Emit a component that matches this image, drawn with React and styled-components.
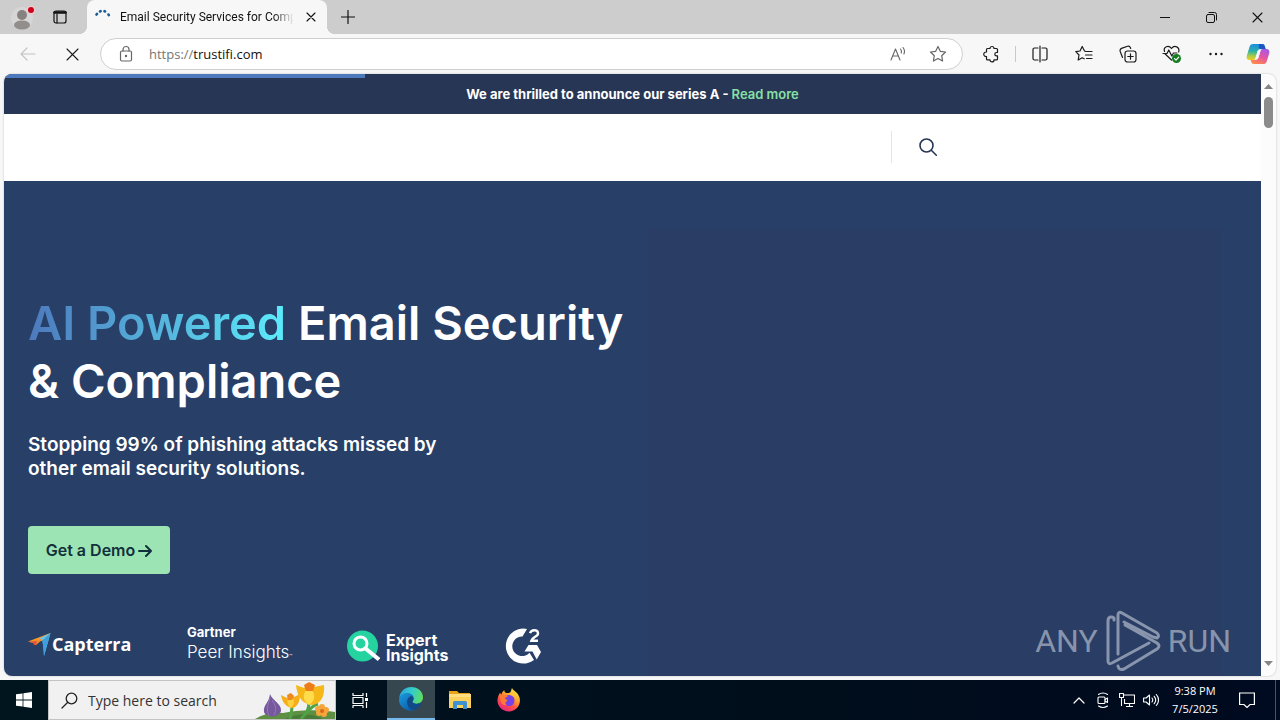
import React from 'react'
import styled, { createGlobalStyle, css } from 'styled-components'

const GlobalStyle = createGlobalStyle`
    * {
        box-sizing: border-box;
    }
    body {
        margin: 0;
        font-family: 'Open Sans', 'Noto Sans', sans-serif;
    }
    button {
        border: 0;
        padding: 0;
        background: none;
        color: inherit;
        font-family: inherit;
    }
    svg {
        display: block;
        flex: none;
    }
`;

const Desktop = styled.div`
    position: relative;
    display: flex;
    flex-direction: column;
    height: 100vh;
    overflow: hidden;
    background: #f7f7f7;
`;

/* browser chrome */

const TabStrip = styled.div`
    display: flex;
    height: 34px;
    background: #cdcdcd;
    color: #111;
`;

const StripButton = styled.button`
    display: flex;
    align-items: center;
    justify-content: center;
    width: ${props => props.$width}px;
    height: 34px;
`;

const Tab = styled.div`
    position: relative;
    display: flex;
    align-items: center;
    width: 240px;
    height: 34px;
    margin-left: 11px;
    padding: 0 8px;
    gap: 9px;
    background: #f7f7f7;
    border-radius: 8px 8px 0 0;
    &::before, &::after {
        content: '';
        position: absolute;
        bottom: 0;
        width: 8px;
        height: 8px;
    }
    &::before {
        left: -8px;
        background: radial-gradient(circle at 0 0, #cdcdcd 8px, #f7f7f7 8px);
    }
    &::after {
        right: -8px;
        background: radial-gradient(circle at 100% 0, #cdcdcd 8px, #f7f7f7 8px);
    }
`;

const TabTitle = styled.span`
    flex: 1;
    overflow: hidden;
    white-space: nowrap;
    font-family: Roboto, 'Open Sans', sans-serif;
    font-size: 12px;
    line-height: 16px;
    color: #111;
    mask-image: linear-gradient(to right, #000 88%, transparent);
`;

const Spacer = styled.div`
    flex: 1;
`;

const Toolbar = styled.div`
    display: flex;
    align-items: center;
    height: 40px;
    padding: 0 2px 0 6px;
    color: #1b1b1b;
`;

const ToolButton = styled.button`
    display: flex;
    align-items: center;
    justify-content: center;
    width: ${props => props.$width || 44}px;
    height: 32px;
    color: ${props => props.$muted ? '#c4c4c4' : 'inherit'};
`;

const AddressBar = styled.div`
    display: flex;
    flex: 1;
    align-items: center;
    height: 32px;
    margin: 0 7px 0 6px;
    padding: 0 4px 0 16px;
    border: 1px solid #cfcfd2;
    border-radius: 16px;
    background: #fff;
    color: #666;
`;

const Address = styled.div`
    flex: 1;
    margin-left: 14px;
    font-size: 13px;
    line-height: 20px;
    color: #767676;
    span {
        color: #111;
    }
`;

const ToolDivider = styled.div`
    width: 1px;
    height: 16px;
    margin: 0 2px 0 1px;
    background: #c9c9c9;
`;

const Viewport = styled.div`
    display: flex;
    flex: 1;
    min-height: 0;
    margin: 0 4px 4px;
    border-radius: 8px;
    overflow: hidden;
    background: #fcfcfc;
    box-shadow: 0 0 2px rgba(0, 0, 0, 0.25);
`;

const ScrollTrack = styled.div`
    display: flex;
    flex-direction: column;
    align-items: center;
    width: 15px;
    padding: 9px 0;
    color: #858585;
`;

const ScrollThumb = styled.div`
    width: 9px;
    height: 31px;
    margin-top: 7px;
    border-radius: 5px;
    background: #8b8b8b;
`;

/* site */

const Site = styled.main`
    position: relative;
    display: flex;
    flex: 1;
    flex-direction: column;
    min-width: 0;
    font-family: Inter, 'Open Sans', sans-serif;
`;

const Progress = styled.div`
    position: absolute;
    top: 0;
    left: 0;
    width: 28.7%;
    height: 4px;
    background: #4d79bd;
`;

const Announcement = styled.div`
    display: flex;
    flex: none;
    align-items: center;
    justify-content: center;
    height: 40px;
    background: #283655;
    color: #fff;
    font-size: 13px;
    font-weight: 700;
    line-height: 20px;
    white-space: pre;
    a {
        color: #86e0a6;
        font-weight: 600;
        text-decoration: none;
    }
`;

const SiteNav = styled.nav`
    display: flex;
    flex: none;
    align-items: center;
    justify-content: flex-end;
    height: 67px;
    padding: 0 315px 2px 0;
    background: #fff;
    color: #283655;
`;

const SearchButton = styled.button`
    display: flex;
    align-items: center;
    justify-content: flex-end;
    width: 55px;
    height: 32px;
    padding-right: 9px;
    border-left: 1px solid #e3e5ea;
`;

const Hero = styled.section`
    display: grid;
    flex: 1;
    grid-template-columns: 620px 1fr;
    min-height: 0;
    padding: 48px 39px 0 24px;
    overflow: hidden;
    background: #284068;
    color: #fff;
`;

const HeroText = styled.div`
    padding-top: 65px;
`;

const HeroMedia = styled.div`
    background: #2a3d64;
`;

const Title = styled.h1`
    margin: 0;
    font-size: 47px;
    font-weight: 600;
    line-height: 58px;
    white-space: nowrap;
    span {
        background: linear-gradient(90deg, #4d79bd, #5cecfb);
        background-clip: text;
        color: transparent;
    }
`;

const SubTitle = styled.p`
    margin: 23px 0 45px;
    font-size: 19px;
    font-weight: 600;
    line-height: 24px;
`;

const DemoButton = styled.button`
    display: flex;
    align-items: center;
    justify-content: center;
    gap: 3px;
    width: 142px;
    height: 48px;
    border-radius: 4px;
    background: #9de4b4;
    color: #12303c;
    font-size: 16px;
    font-weight: 600;
    line-height: 20px;
`;

const Logos = styled.div`
    display: flex;
    align-items: center;
    gap: 55px;
    height: 40px;
    margin-top: 52px;
`;

const Capterra = styled.div`
    display: flex;
    align-items: center;
    gap: 1px;
    width: 104px;
    padding-bottom: 4px;
    font-family: 'Open Sans', sans-serif;
    font-size: 18px;
    font-weight: 700;
    line-height: 24px;
`;

const Gartner = styled.div`
    width: 105px;
    white-space: nowrap;
    font-size: 17px;
    font-weight: 300;
    line-height: 24px;
    strong {
        display: block;
        font-size: 13px;
        font-weight: 700;
        line-height: 16px;
    }
    small {
        font-size: 5px;
    }
`;

const Expert = styled.div`
    display: flex;
    align-items: center;
    gap: 6px;
    width: 103px;
    font-size: 16px;
    font-weight: 700;
    line-height: 15px;
    span {
        padding-top: 4px;
    }
`;

const Watermark = styled.div`
    position: absolute;
    right: 49px;
    bottom: 48px;
    display: flex;
    align-items: center;
    gap: 7px;
    color: rgba(200, 208, 222, 0.6);
    font-family: Roboto, 'Liberation Sans', sans-serif;
    font-size: 32px;
    font-weight: 400;
    line-height: 62px;
`;

/* taskbar */

const Taskbar = styled.footer`
    display: flex;
    flex: none;
    height: 40px;
    background: linear-gradient(90deg, #00151e, #000d1c 70%, #000a20);
    color: #fff;
`;

const TaskButton = styled.button`
    display: flex;
    align-items: center;
    justify-content: center;
    width: ${props => props.$width || 48}px;
    height: 40px;
    ${props => props.$active && css`
        background: #37474f;
        border-bottom: 2px solid #76b9ed;
    `}
`;

const SearchBox = styled.label`
    display: flex;
    align-items: center;
    width: 288px;
    height: 40px;
    padding-left: 12px;
    border: 1px solid #c4c4c4;
    background: #f1f1f1;
    color: #222;
    overflow: hidden;
`;

const SearchInput = styled.input`
    flex: 1;
    min-width: 0;
    margin-left: 10px;
    padding: 0;
    border: 0;
    background: none;
    font-family: 'Open Sans', sans-serif;
    font-size: 14px;
    &::placeholder {
        color: #333;
        opacity: 1;
    }
`;

const Apps = styled.div`
    display: flex;
    gap: 1px;
    margin-left: 3px;
`;

const Clock = styled.time`
    width: 48px;
    margin-left: 8px;
    padding-top: 2px;
    text-align: center;
    font-size: 11px;
    line-height: 18px;
    white-space: nowrap;
`;

const ShowDesktop = styled.button`
    width: 5px;
    height: 40px;
    border-left: 1px solid #4a525f;
`;

const Icon = ({ size = 20, width, height, children, stroke = 1.2, ...rest }) => (
    <svg
        width={width || size}
        height={height || size}
        viewBox={`0 0 ${width || size} ${height || size}`}
        fill="none"
        stroke="currentColor"
        strokeWidth={stroke}
        strokeLinecap="round"
        strokeLinejoin="round"
        aria-hidden="true"
        {...rest}
    >
        {children}
    </svg>
)

const ProfileIcon = () => (
    <Icon size={28} stroke="0">
        <circle cx="14" cy="15" r="11" fill="#d6d6d6" />
        <circle cx="14" cy="12" r="5" fill="#858280" />
        <ellipse cx="14" cy="22" rx="8" ry="4.5" fill="#918e8b" />
        <circle cx="23" cy="7" r="4.5" fill="#e6cccc" />
        <circle cx="23" cy="7" r="3" fill="#d0021b" />
    </Icon>
)

const CloseIcon = ({ size = 10 }) => (
    <Icon size={size} stroke="1.1">
        <path d={`M1 1L${size - 1} ${size - 1}M${size - 1} 1L1 ${size - 1}`} />
    </Icon>
)

const CopilotIcon = () => (
    <svg width="24" height="22" viewBox="0 0 24 22" aria-hidden="true">
        <defs>
            <linearGradient id="copA" x1="0.3" y1="0" x2="0.2" y2="1">
                <stop offset="0" stopColor="#1b8fe0" />
                <stop offset="0.45" stopColor="#2db1a8" />
                <stop offset="0.75" stopColor="#a7cd45" />
                <stop offset="1" stopColor="#f5cb21" />
            </linearGradient>
            <linearGradient id="copB" x1="0.8" y1="0" x2="0.3" y2="1">
                <stop offset="0" stopColor="#a35be8" />
                <stop offset="0.5" stopColor="#e554a4" />
                <stop offset="1" stopColor="#ff8a4c" />
            </linearGradient>
        </defs>
        <path d="M7 1h9c2 0 2.500 1 3 3l.6 2H15c-2 0-3 1-3.500 2.500L9.500 15c-.5 1.500-1 2-2.500 2H4c-3 0-4-2-3-5l2.500-8C4 2 5 1 7 1z" fill="url(#copA)" />
        <path d="M13 1h3c2 0 2.500 1 3 3l.6 2H15c-1.300 0-2-.6-2.300-2z" fill="#1d55c4" />
        <path d="M17 21H8c-2 0-2.500-1-3-3l-.4-1H9c2 0 3-1 3.500-2.500L14.500 8c.5-1.500 1-2 2.500-2h3c3 0 4 2 3 5l-2.500 8c-.5 1.500-1.500 2-3.500 2z" fill="url(#copB)" />
        <path d="M11.800 7.500h2.800L12.300 15H9.500z" fill="#f7f7f7" />
    </svg>
)

const EdgeIcon = () => (
    <svg width="24" height="24" viewBox="0 0 24 24" aria-hidden="true">
        <defs>
            <linearGradient id="edgeTop" x1="0" y1="0.4" x2="1" y2="0.6">
                <stop offset="0" stopColor="#2aa9e0" />
                <stop offset="0.55" stopColor="#37cfc4" />
                <stop offset="1" stopColor="#62dd58" />
            </linearGradient>
            <linearGradient id="edgeLow" x1="0" y1="0" x2="0.8" y2="1">
                <stop offset="0" stopColor="#1a9de2" />
                <stop offset="1" stopColor="#0c59a4" />
            </linearGradient>
        </defs>
        <path d="M.2 11C1 4.500 6 0 12.200 0 19 0 24 4.700 24 10.300c0 4-3 6.400-6.400 6.400-2.700 0-4.200-.9-4.200-1.900 0-.8 1.200-1.200 1.200-3.300C14.600 8.600 12 6.400 8.600 6.400 4.800 6.400 1.500 8.500.2 11z" fill="url(#edgeTop)" />
        <path d="M.1 12.500C.3 8.600 4 5.800 8.500 6c3.300.2 5.500 2 6 4-1-.9-2-1-3-.6-2 .8-3.300 3-3.300 5.600 0 4.300 3.500 8 8 8.200C9 25.600-.6 20.800.1 12.500z" fill="url(#edgeLow)" />
        <path d="M8.200 14.800c0-2.400 1.400-4.600 3.400-5.200 1.600-.3 2.800.5 2.900 2 .1 1.700-1.100 2.300-1.100 3.200 0 1 1.600 2.100 4.300 2.100 1.900 0 3.500-.7 4.500-1.400.4-.2.700.2.500.6C21 20 17.500 23 14 23c-3.400-.6-5.800-4.200-5.800-8.200z" fill="#114a8b" />
    </svg>
)

const FolderIcon = () => (
    <svg width="22" height="20" viewBox="0 0 22 20" aria-hidden="true">
        <path d="M0 1h8l2 2h11v3H0z" fill="#e8a317" />
        <path d="M0 4h22v14H0z" fill="#fbd05c" />
        <path d="M0 4h22v3H0z" fill="#ffdd83" />
        <path d="M4 19v-6c0-1.500.8-2 2-2h10c1.200 0 2 .5 2 2v6h-4v-4H8v4z" fill="#3d93d0" />
    </svg>
)

const FirefoxIcon = () => (
    <svg width="24" height="24" viewBox="0 0 24 24" aria-hidden="true">
        <defs>
            <linearGradient id="fox" x1="0.8" y1="0" x2="0.2" y2="1">
                <stop offset="0" stopColor="#fff14d" />
                <stop offset="0.35" stopColor="#ffa52c" />
                <stop offset="0.65" stopColor="#ff4c49" />
                <stop offset="1" stopColor="#e0218a" />
            </linearGradient>
        </defs>
        <path d="M15 0c1 3 6 4 7.500 9.500C24.500 17 19 23.500 12 23.500S0 18 .5 12C.6 8.500 2 6.500 3.200 4.500c.2 1 .5 1.600 1 2.200C5 4.500 5.800 3.200 7.400 2.200 7.300 3.700 8 4.500 9 5h3c2 0 2-3 3-5z" fill="url(#fox)" />
        <circle cx="12" cy="12.500" r="5.500" fill="#7542e5" />
        <path d="M3 8c3-2 6-1.500 8 1-1.500 0-3 .5-3 2 3 1 3 1 1.500 2.500C8 15 8 16 10 17c-5 1-7-3-7-9z" fill="#ff7a35" />
        <path d="M12 5c4-1 7 2 7.500 6-1-2-2-3-4-3.500C14 7 13 6 12 5z" fill="#ffc93c" />
    </svg>
)

const FlowersArt = () => (
    <svg width="80" height="38" viewBox="0 0 80 38" aria-hidden="true">
        <path d="M0 38c8-5 18-7 28-6 12-3 36-4 52-1v7z" fill="#5e8f43" />
        <path d="M30 38c8-5 24-6 34-2l4 2z" fill="#497c38" />
        <path d="M37 25c0 5-1 8-2 13M54 21c0 7-2 11-8 17M51 33c5-7 8-9 12-10" fill="none" stroke="#4fa344" strokeWidth="3" />
        <path d="M15 13c2 6 12 10 11 17-2 7-15 7-17 1-1-7 5-9 6-18z" fill="#76599d" />
        <path d="M15 17c-2 7-4 11-1 18M17 19c4 6 5 10 2 15" fill="none" stroke="#9478b8" />
        <path d="M26 14l6 3 3-5 4 4 6-3c0 7-2 13-8 14-6-1-10-6-11-13z" fill="#f5ae18" />
        <path d="M35 14c-4 5-3 10 1 13 4-4 4-9-1-13z" fill="#ffd03d" />
        <path d="M32 14l4-2 3 3-2 4h-4z" fill="#ee8a1c" />
        <path d="M41 4l8 3 5-5 5 4 10-2c1 11-3 19-12 20-10-1-15-9-16-20z" fill="#f6b819" />
        <path d="M54 6c-7 6-7 13 0 18 7-5 7-12 0-18z" fill="#ffdc4c" />
        <path d="M49 4l5-3 6 3-2 6h-7z" fill="#ee7c19" />
        <g fill="#f4a63a">
            <circle cx="67" cy="26" r="3" />
            <circle cx="71" cy="29" r="3" />
            <circle cx="69" cy="33" r="3" />
            <circle cx="64" cy="32" r="3" />
            <circle cx="63" cy="28" r="3" />
        </g>
        <circle cx="67" cy="30" r="2" fill="#d9661b" />
    </svg>
)

const BrowserTabs = () => (
    <TabStrip>
        <StripButton $width={44} aria-label="Profile"><ProfileIcon /></StripButton>
        <StripButton $width={32} aria-label="Tab actions">
            <Icon size={14}>
                <rect x="1" y="1" width="12" height="12" rx="2" />
                <path d="M1.500 2.500h11" strokeWidth="2.5" />
                <path d="M4 4v9" />
            </Icon>
        </StripButton>
        <Tab>
            <Icon size={16} stroke="2.600" style={{ color: '#1c5c96' }}>
                <path d="M1.500 5.500l.5-.6M5 2.400l.6-.2M9.500 2.200l.6.200M13.500 5.500l.3.600" />
            </Icon>
            <TabTitle>Email Security Services for Compa</TabTitle>
            <StripButton $width={16} aria-label="Close tab"><CloseIcon /></StripButton>
        </Tab>
        <StripButton $width={42} aria-label="New tab">
            <Icon size={14}><path d="M7 .5v13M.5 7h13" /></Icon>
        </StripButton>
        <Spacer />
        <StripButton $width={46} aria-label="Minimize">
            <Icon size={10}><path d="M0 5.500h10" /></Icon>
        </StripButton>
        <StripButton $width={46} aria-label="Restore">
            <Icon size={11} stroke="1">
                <rect x=".5" y="2.500" width="8" height="8" rx="1.500" />
                <path d="M3 .5h5.500q2 0 2 2V8" />
            </Icon>
        </StripButton>
        <StripButton $width={46} aria-label="Close"><CloseIcon size={11} /></StripButton>
    </TabStrip>
)

const BrowserToolbar = () => (
    <Toolbar>
        <ToolButton $muted aria-label="Back">
            <Icon size={16}><path d="M15 8H1M7 2L1 8l6 6" /></Icon>
        </ToolButton>
        <ToolButton aria-label="Stop loading"><CloseIcon size={13} /></ToolButton>
        <AddressBar>
            <Icon width={18} height={18}>
                <rect x="3.500" y="6" width="11" height="10" rx="1.500" />
                <path d="M6 6V4.500a3 3 0 0 1 6 0V6" />
                <circle cx="9" cy="11" r=".6" fill="currentColor" />
            </Icon>
            <Address>https://<span>trustifi.com</span></Address>
            <ToolButton $width={40} aria-label="Read aloud">
                <Icon size={18} stroke="1.100">
                    <path d="M2 15L6.500 4 11 15M3.600 11h5.800M11.500 4c1 1.200 1.200 2.600.8 4M14 2.500c1.600 2 1.800 4.500.9 6.500" />
                </Icon>
            </ToolButton>
            <ToolButton $width={40} aria-label="Add to favorites">
                <Icon size={18}>
                    <path d="M9 1.500l2.300 4.800 5.200.7-3.800 3.700.9 5.300L9 13.500 4.400 16l.9-5.300L1.500 7l5.200-.7z" />
                </Icon>
            </ToolButton>
        </AddressBar>
        <ToolButton aria-label="Extensions">
            <Icon size={18}>
                <path d="M3.500 7V4.500a1 1 0 0 1 1-1H7a2 2 0 0 1 4 0h2.500a1 1 0 0 1 1 1v3h-1a1.700 1.700 0 0 0 0 3.400h1v3a1 1 0 0 1-1 1H11a2 2 0 0 1-4 0H4.500a1 1 0 0 1-1-1V11.500H3a2 2 0 0 1 0-4.500z" />
            </Icon>
        </ToolButton>
        <ToolDivider />
        <ToolButton aria-label="Split screen">
            <Icon size={18}>
                <path d="M7 3H3.500A1.500 1.500 0 0 0 2 4.500v9A1.500 1.500 0 0 0 3.500 15H7M11 3h3.500A1.500 1.500 0 0 1 16 4.500v9a1.500 1.500 0 0 1-1.500 1.500H11M9 1v16" />
            </Icon>
        </ToolButton>
        <ToolButton aria-label="Favorites">
            <Icon size={18}>
                <path d="M11 6.500L9.500 6 7.200 1.500 5 6l-4.200.6L4 10l-.8 5 4-2.200 2 1M11.500 6.500H17M10.500 10H17M11.500 13.500H17" />
            </Icon>
        </ToolButton>
        <ToolButton aria-label="Collections">
            <Icon size={18}>
                <rect x="6" y="6" width="11" height="11" rx="2.500" />
                <path d="M11.500 8.800v5.400M8.800 11.500h5.400M3.500 12.500L1.200 6.500C.8 5 1.200 4 2.500 3.400l6-2.200c1.300-.4 2.300 0 2.800 1.300l.4 1" />
            </Icon>
        </ToolButton>
        <ToolButton aria-label="Browser essentials">
            <Icon size={20}>
                <path d="M9.500 16L3.200 10M2.500 7.500C1 3 6.500.5 9.500 4.500c3-4 8.500-1.500 7.200 3.500M1 9.500h4l1.800-3.500 3 6 1.700-3h3.500" />
                <circle cx="14.500" cy="14.500" r="4.500" fill="#147d20" stroke="none" />
                <path d="M12.500 14.700l1.500 1.500 2.700-3" stroke="#fff" />
            </Icon>
        </ToolButton>
        <ToolButton aria-label="Settings and more">
            <Icon width={16} height={4} stroke="0">
                <g fill="currentColor">
                    <circle cx="2.500" cy="2" r="1.200" />
                    <circle cx="8" cy="2" r="1.200" />
                    <circle cx="13.500" cy="2" r="1.200" />
                </g>
            </Icon>
        </ToolButton>
        <ToolButton $width={40} aria-label="Copilot"><CopilotIcon /></ToolButton>
    </Toolbar>
)

const Scrollbar = () => (
    <ScrollTrack>
        <svg width="9" height="7" viewBox="0 0 9 7"><path d="M4.500 1L9 6H0z" fill="currentColor" /></svg>
        <ScrollThumb />
        <Spacer />
        <svg width="9" height="7" viewBox="0 0 9 7"><path d="M4.500 6L9 1H0z" fill="currentColor" /></svg>
    </ScrollTrack>
)

const PartnerLogos = () => (
    <Logos>
        <Capterra>
            <svg width="23" height="25" viewBox="0 0 23 25" aria-hidden="true">
                <path d="M0 9.500L22.500 1 14 9z" fill="#ff9d28" />
                <path d="M0 9.500L15 7 8 13l-3-2z" fill="#f08a2b" />
                <path d="M1 9.700l7-.7 1 1.500-2.500 3L5 11z" fill="#e5533a" />
                <path d="M22.500 1L11 6.500 15 8z" fill="#68c5ed" />
                <path d="M22.500 1L16 24l-1-16z" fill="#68c5ed" />
                <path d="M22.500 1L14 9l1 4 1 11z" fill="#3f9fdc" />
            </svg>
            Capterra
        </Capterra>
        <Gartner>
            <strong>Gartner</strong>
            Peer Insights<small>™</small>
        </Gartner>
        <Expert>
            <svg width="33" height="33" viewBox="0 0 33 33" aria-hidden="true">
                <circle cx="15.500" cy="16" r="15.500" fill="#25d3a0" />
                <circle cx="13.500" cy="13.500" r="6.500" fill="none" stroke="#fff" strokeWidth="3" />
                <path d="M18.500 18.500L32 29.500" stroke="#fff" strokeWidth="4" />
            </svg>
            <span>Expert<br />Insights</span>
        </Expert>
        <svg width="37" height="36" viewBox="0 0 37 36" role="img" aria-label="G2">
            <path d="M22 1A17.500 17.500 0 1 0 29 32L24.500 24.700A9.800 9.800 0 1 1 17.500 8.500z" fill="#fff" />
            <path d="M23.500 17h8.500l4 7-4.300 7.500L27.500 23.500H19.500z" fill="#fff" />
            <path d="M25 5.200c.8-2.300 2.600-3 4.300-3 4.300 0 4.700 4 2 5.800-2.500 1.600-4.500 2.600-5 4.800H33" fill="none" stroke="#fff" strokeWidth="2.400" />
        </svg>
    </Logos>
)

const WindowsTaskbar = () => (
    <Taskbar>
        <TaskButton aria-label="Start">
            <svg width="16" height="16" viewBox="0 0 16 16" fill="#fff">
                <path d="M0 2.300L6.600 1.400v6.200H0zM7.400 1.300L16 0v7.600H7.400zM0 8.400h6.600v6.200L0 13.700zM7.400 8.400H16V16l-8.600-1.300z" />
            </svg>
        </TaskButton>
        <SearchBox>
            <Icon size={17} stroke="1.300">
                <circle cx="10.500" cy="6.500" r="5.300" />
                <path d="M6.800 10.300L1 16" />
            </Icon>
            <SearchInput type="text" placeholder="Type here to search" aria-label="Search" />
            <FlowersArt />
        </SearchBox>
        <TaskButton aria-label="Task view">
            <Icon size={17} stroke="1.200" strokeLinecap="butt">
                <path d="M1 1v2.500h10V1M1 16v-2.500h10V16M1 5.500h10v6H1zM14.500 1v4M14.500 10v6" />
                <path d="M14.500 6v3" strokeWidth="3" />
            </Icon>
        </TaskButton>
        <Apps>
            <TaskButton $active aria-label="Microsoft Edge"><EdgeIcon /></TaskButton>
            <TaskButton aria-label="File Explorer"><FolderIcon /></TaskButton>
            <TaskButton aria-label="Firefox"><FirefoxIcon /></TaskButton>
        </Apps>
        <Spacer />
        <TaskButton $width={24} aria-label="Show hidden icons">
            <Icon width={12} height={8}><path d="M1 7l5-5 5 5" /></Icon>
        </TaskButton>
        <TaskButton $width={24} aria-label="Meet now">
            <Icon size={16} stroke="1.100">
                <rect x="3" y="5" width="7" height="6.500" rx="1" />
                <path d="M10 7.500l2.500-1.500v4.500L10 9M3.500 2.500c2.500-2 6.500-2 9 0M3.500 14c2.500 1.600 6.500 1.600 9 0" />
            </Icon>
        </TaskButton>
        <TaskButton $width={24} aria-label="Network">
            <Icon size={16} stroke="1.100" strokeLinecap="butt">
                <path d="M5 3h10.500v8.500h-10V7M10.500 11.500V14M7 14.500h7M.5 1.500h4v4h-4zM2.500 5.500V14" />
            </Icon>
        </TaskButton>
        <TaskButton $width={24} aria-label="Volume">
            <Icon size={16} stroke="1.100">
                <path d="M.6 6v4h2.500L6.500 13V3L3.100 6zM9 6c.9 1.200.9 2.800 0 4M11.200 4.300c1.800 2.200 1.800 5.200 0 7.400M13.300 2.500c2.700 3.300 2.700 7.700 0 11" />
            </Icon>
        </TaskButton>
        <Clock>9:38 PM<br />7/5/2025</Clock>
        <TaskButton $width={56} aria-label="Notifications">
            <Icon size={16} strokeLinejoin="miter"><path d="M.6 1h14.800v11.500H11L8 15.500l-3-3H.6z" /></Icon>
        </TaskButton>
        <ShowDesktop aria-label="Show desktop" />
    </Taskbar>
)

const App = () => (
    <Desktop>
        <GlobalStyle />
        <BrowserTabs />
        <BrowserToolbar />
        <Viewport>
            <Site>
                <Announcement>
                    We are thrilled to announce our series A - <a href="#series-a">Read more</a>
                </Announcement>
                <Progress />
                <SiteNav>
                    <SearchButton aria-label="Search the site">
                        <Icon size={18} stroke="1.600">
                            <circle cx="7.500" cy="7.500" r="6.500" />
                            <path d="M12.300 12.300l5 5" />
                        </Icon>
                    </SearchButton>
                </SiteNav>
                <Hero>
                    <HeroText>
                        <Title><span>AI Powered</span> Email Security<br />&amp; Compliance</Title>
                        <SubTitle>
                            Stopping 99% of phishing attacks missed by<br />
                            other email security solutions.
                        </SubTitle>
                        <DemoButton>
                            Get a Demo
                            <Icon size={14} stroke="2"><path d="M1 8h12M8 3l5 5-5 5" /></Icon>
                        </DemoButton>
                        <PartnerLogos />
                    </HeroText>
                    <HeroMedia />
                </Hero>
            </Site>
            <Scrollbar />
        </Viewport>
        <WindowsTaskbar />
        <Watermark>
            ANY
            <Icon width={56} height={62} stroke="3">
                <path d="M9 10V8q-1-1-3-1-3 0-3 4v40q0 4 4 2L44 33M13 44V5q0-4 4-2l35 20q3 3 0 5l-4-1L19 12M13 56q1 5 6 3l33-20q4-3 0-6L20 15" />
            </Icon>
            RUN
        </Watermark>
    </Desktop>
)

export default App
